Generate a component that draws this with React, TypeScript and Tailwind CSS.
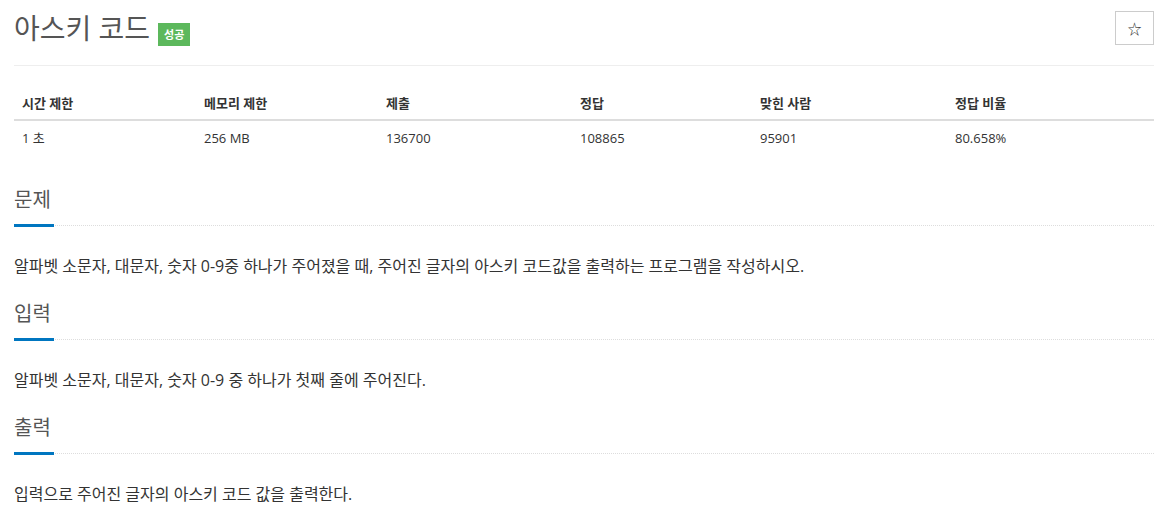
import React from "react";

const font = { fontFamily: '"Open Sans", "Noto Sans CJK KR", sans-serif' };

const cols = [
  { h: "시간 제한", v: "1 초", w: "w-[182px]" },
  { h: "메모리 제한", v: "256 MB", w: "w-[182px]" },
  { h: "제출", v: "136700", w: "w-[194px]" },
  { h: "정답", v: "108865", w: "w-[180px]" },
  { h: "맞힌 사람", v: "95901", w: "w-[195px]" },
  { h: "정답 비율", v: "80.658%", w: "flex-1" },
];

function Section({ title, text, first }: { title: string; text: string; first?: boolean }) {
  return (
    <section className={first ? "mt-[32px]" : "mt-[24px]"}>
      <div className="border-b border-dotted border-[#dddddd]">
        <h2 className="inline-block min-w-[40px] text-[20px] leading-[26px] text-[#555555] pb-[11px] border-b-[3px] border-[#0076c0] -mb-[2px]">
          {title}
        </h2>
      </div>
      <p className="mt-[29px] text-[16px] leading-[22px] text-[#333333]">{text}</p>
    </section>
  );
}

export default function App() {
  return (
    <div className="bg-white w-[1171px] h-[511px] overflow-hidden pl-[14px] pr-[17px]" style={font}>
      <div className="flex items-start justify-between pt-[8px] pb-[17px] border-b border-[#eeeeee]">
        <div className="flex items-start">
          <h1 className="text-[28px] leading-[40px] text-[#555555]">아스키 코드</h1>
          <span className="ml-[8px] mt-[15px] bg-[#5cb85c] text-white text-[11px] font-bold leading-[23px] h-[23px] px-[6px]">
            성공
          </span>
        </div>
        <button className="mt-[3px] w-[39px] h-[34px] border border-[#cccccc] bg-white flex items-center justify-center text-[14px] text-[#333333]">
          ☆
        </button>
      </div>
      <div className="mt-[19px] text-[13px] text-[#333333]">
        <div className="flex border-b-2 border-[#dddddd]">
          {cols.map((c) => (
            <div key={c.h} className={`${c.w} px-[8px] pt-[8px] pb-[6px] leading-[20px] font-bold`}>
              {c.h}
            </div>
          ))}
        </div>
        <div className="flex">
          {cols.map((c) => (
            <div key={c.h} className={`${c.w} px-[8px] py-[7px] leading-[20px]`}>
              {c.v}
            </div>
          ))}
        </div>
      </div>
      <Section
        first
        title="문제"
        text="알파벳 소문자, 대문자, 숫자 0-9중 하나가 주어졌을 때, 주어진 글자의 아스키 코드값을 출력하는 프로그램을 작성하시오."
      />
      <Section title="입력" text="알파벳 소문자, 대문자, 숫자 0-9 중 하나가 첫째 줄에 주어진다." />
      <Section title="출력" text="입력으로 주어진 글자의 아스키 코드 값을 출력한다." />
    </div>
  );
}
